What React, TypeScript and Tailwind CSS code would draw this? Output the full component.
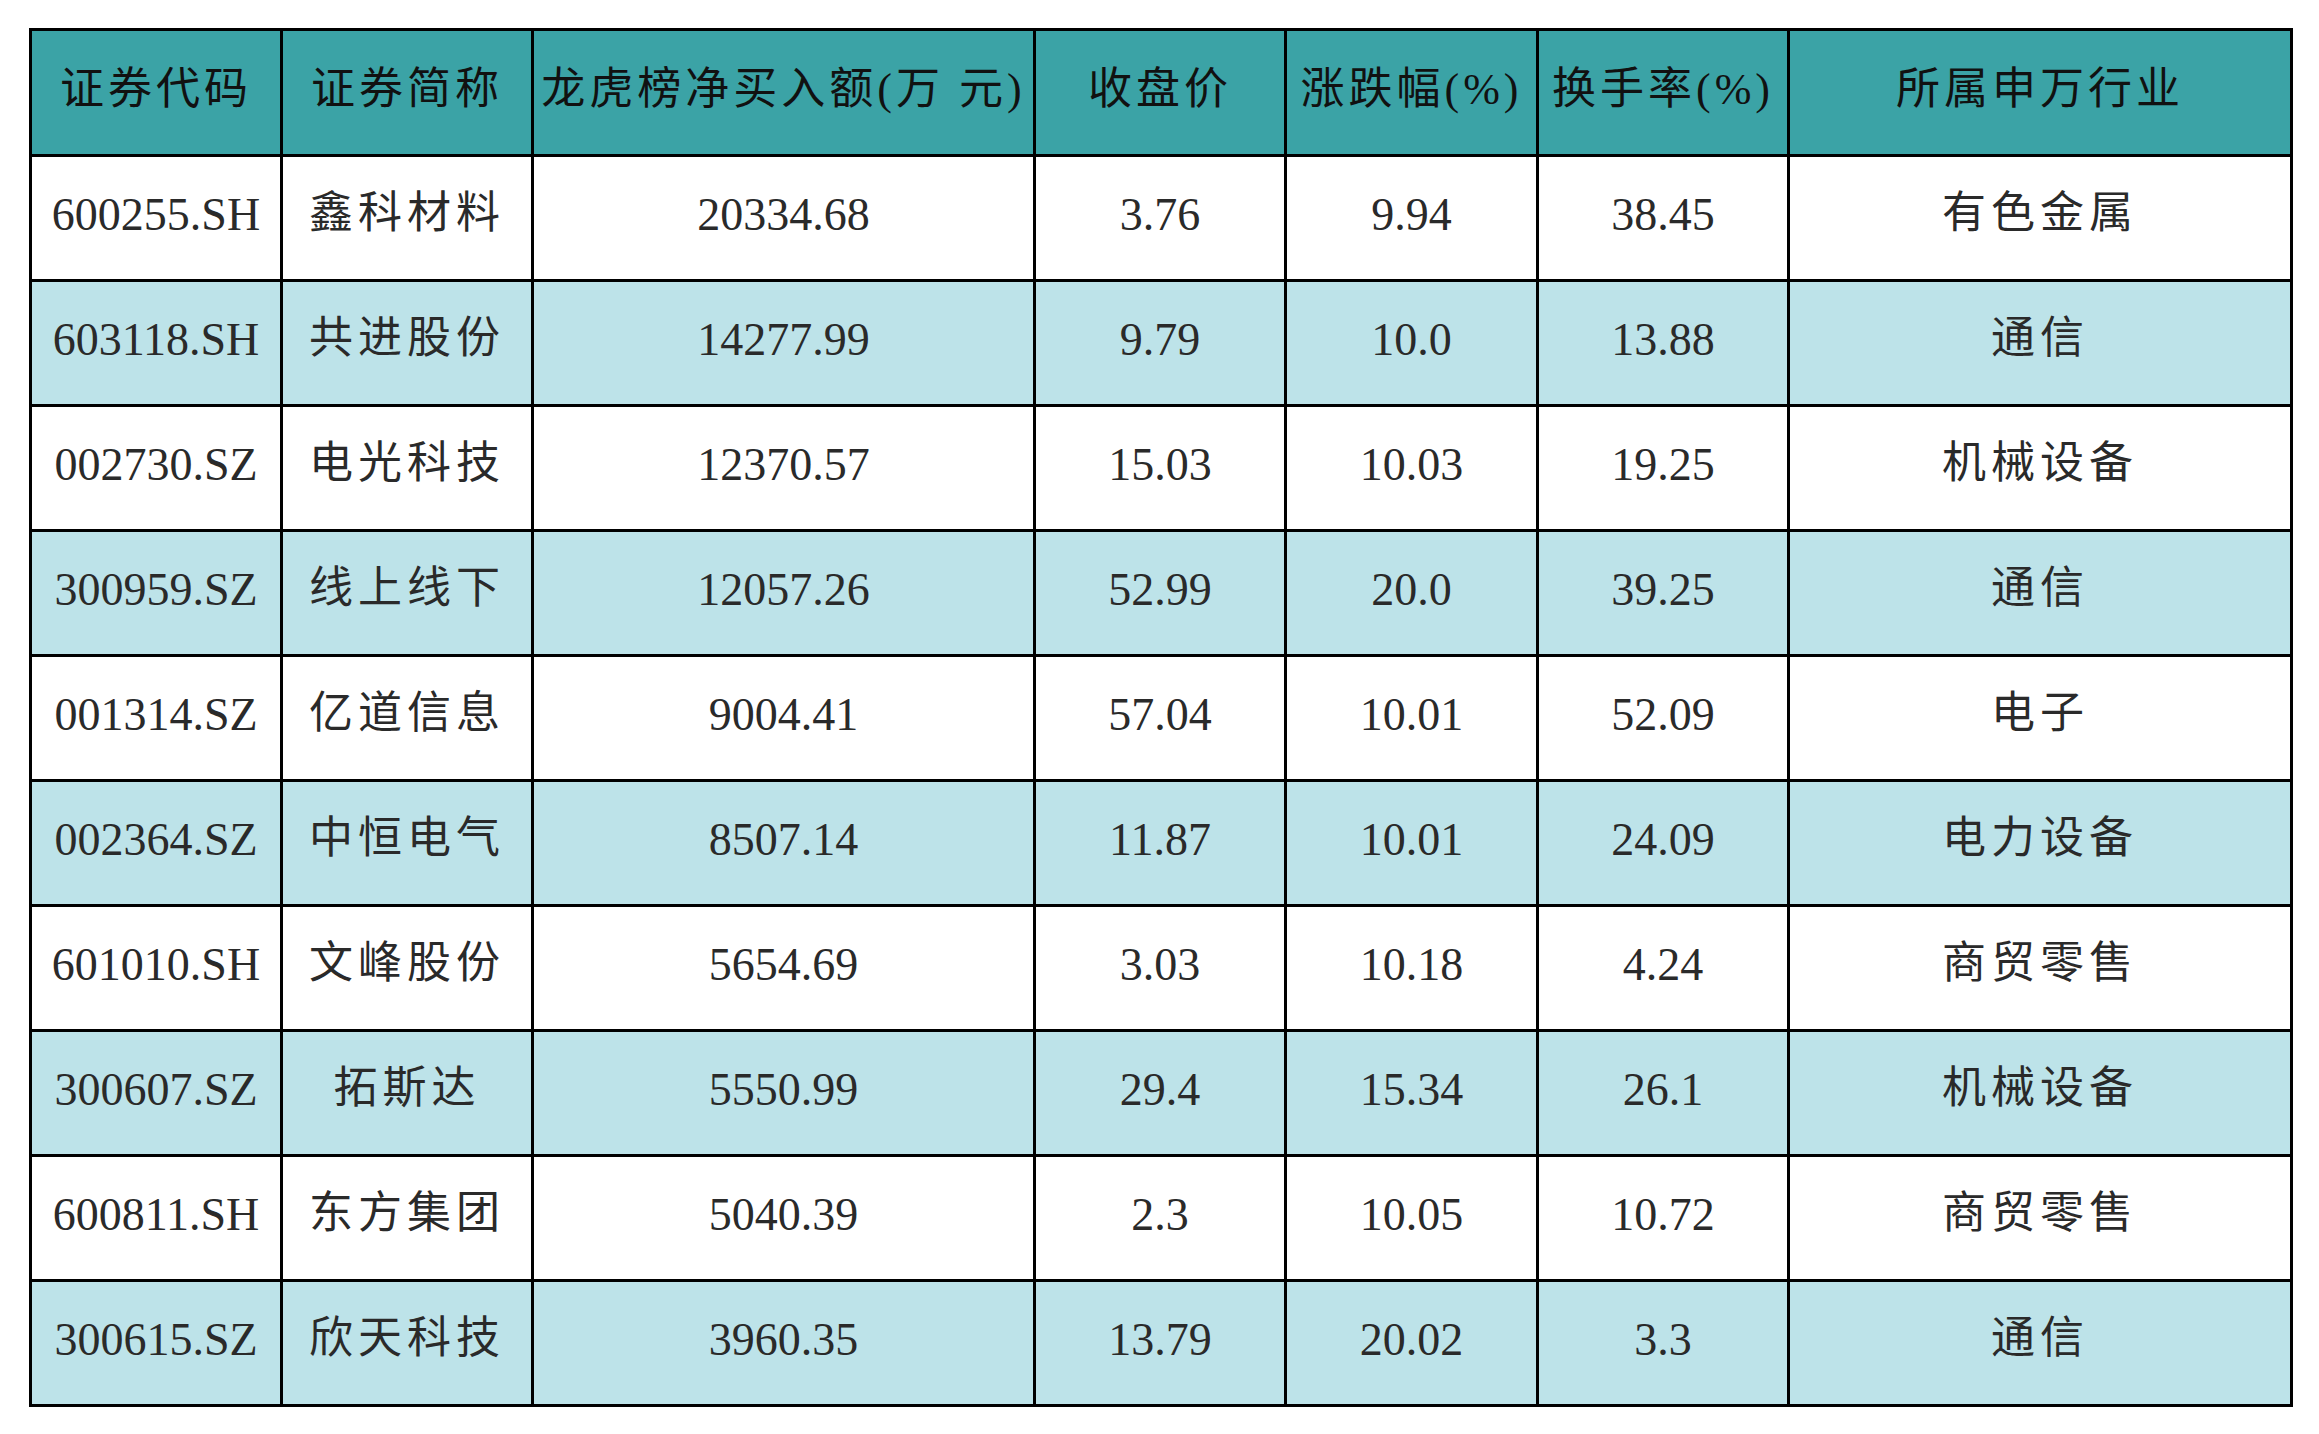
import React from "react";

const headers = [
  "证券代码",
  "证券简称",
  "龙虎榜净买入额(万 元)",
  "收盘价",
  "涨跌幅(%)",
  "换手率(%)",
  "所属申万行业",
];

const rows = [
  ["600255.SH", "鑫科材料", "20334.68", "3.76", "9.94", "38.45", "有色金属"],
  ["603118.SH", "共进股份", "14277.99", "9.79", "10.0", "13.88", "通信"],
  ["002730.SZ", "电光科技", "12370.57", "15.03", "10.03", "19.25", "机械设备"],
  ["300959.SZ", "线上线下", "12057.26", "52.99", "20.0", "39.25", "通信"],
  ["001314.SZ", "亿道信息", "9004.41", "57.04", "10.01", "52.09", "电子"],
  ["002364.SZ", "中恒电气", "8507.14", "11.87", "10.01", "24.09", "电力设备"],
  ["601010.SH", "文峰股份", "5654.69", "3.03", "10.18", "4.24", "商贸零售"],
  ["300607.SZ", "拓斯达", "5550.99", "29.4", "15.34", "26.1", "机械设备"],
  ["600811.SH", "东方集团", "5040.39", "2.3", "10.05", "10.72", "商贸零售"],
  ["300615.SZ", "欣天科技", "3960.35", "13.79", "20.02", "3.3", "通信"],
];

const colWidths = ["w-[251px]", "w-[251px]", "w-[502px]", "w-[251px]", "w-[252px]", "w-[251px]", "w-[503px]"];

export default function App() {
  return (
    <div className="w-[2319px] h-[1434px] bg-white pt-[28px] pl-[29px] font-['Liberation_Serif','Noto_Sans_CJK_SC',serif]">
      <table className="table-fixed border-collapse border-[3px] border-black">
        <colgroup>
          {colWidths.map((w, i) => (
            <col key={i} className={w} />
          ))}
        </colgroup>
        <thead>
          <tr className="h-[126px] bg-[#3ba3a6]">
            {headers.map((h) => (
              <th
                key={h}
                className="border-[3px] border-black p-0 pb-[6px] text-center align-middle font-normal text-[44px] tracking-[4px] text-[#111]"
              >
                {h}
              </th>
            ))}
          </tr>
        </thead>
        <tbody>
          {rows.map((r, i) => (
            <tr key={r[0]} className={`h-[125px] ${i % 2 === 0 ? "bg-white" : "bg-[#bde3e9]"}`}>
              {r.map((c, j) => (
                <td
                  key={j}
                  className={`border-[3px] border-black p-0 pb-[8px] text-center align-middle text-[#2a2a2a] ${
                    j === 1 || j === 6 ? "text-[44px] tracking-[5px]" : "text-[46px]"
                  }`}
                >
                  {c}
                </td>
              ))}
            </tr>
          ))}
        </tbody>
      </table>
    </div>
  );
}
